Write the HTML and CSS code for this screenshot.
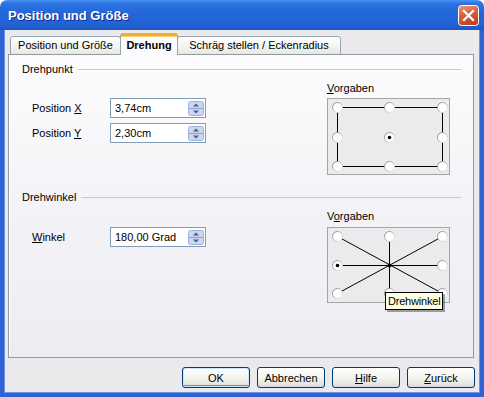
FILE: index.html
```html
<!DOCTYPE html>
<html lang="de">
  <head>
    <meta charset="UTF-8" />
    <meta name="viewport" content="width=device-width, initial-scale=1.0" />
    <title>Position und Größe</title>
    <link rel="stylesheet" href="styles.css">
  </head>
  <body>
    <div class="window">
      <div class="titlebar">
        <span class="title">Position und Größe</span>
        <span class="close">
          <svg width="21" height="21" viewBox="0 0 21 21">
            <defs>
              <linearGradient id="red" x1="0" y1="0" x2="0.3" y2="1">
                <stop offset="0" stop-color="#EE9A7A" />
                <stop offset="0.5" stop-color="#D9613C" />
                <stop offset="1" stop-color="#C24422" />
              </linearGradient>
            </defs>
            <rect x="0.5" y="0.5" width="20" height="20" rx="3" fill="url(#red)" stroke="#fff" />
            <path d="M6 6 L15 15 M15 6 L6 15" stroke="#fff" stroke-width="2.2" stroke-linecap="square" />
          </svg>
        </span>
      </div>

      <div class="client">
        <div class="tabs">
          <div class="tab tab-pos">Position und Größe</div>
          <div class="tab tab-rot active">Drehung</div>
          <div class="tab tab-slant">Schräg stellen / Eckenradius</div>
        </div>

        <div class="page">
          <section class="group">
            <div class="legend"><span>Drehpunkt</span></div>
            <div class="group-body">
              <div class="fields">
                <div class="field">
                  <label>Position <u>X</u></label>
                  <div class="spin">
                    <span>3,74cm</span>
                    <svg class="spin-btn" width="16" height="15" viewBox="0 0 16 15"><rect x="0.5" y="0.5" width="15" height="14" rx="2" fill="#CAD6F2" stroke="#9FB2DA" /><line x1="1" y1="7.5" x2="15" y2="7.5" stroke="#8CA2CF" /><path d="M8 2.5 L11 5.5 H5Z" fill="#4B5E86" /><path d="M8 12.5 L11 9.5 H5Z" fill="#4B5E86" /></svg>
                  </div>
                </div>
                <div class="field">
                  <label>Position <u>Y</u></label>
                  <div class="spin">
                    <span>2,30cm</span>
                    <svg class="spin-btn" width="16" height="15" viewBox="0 0 16 15"><rect x="0.5" y="0.5" width="15" height="14" rx="2" fill="#CAD6F2" stroke="#9FB2DA" /><line x1="1" y1="7.5" x2="15" y2="7.5" stroke="#8CA2CF" /><path d="M8 2.5 L11 5.5 H5Z" fill="#4B5E86" /><path d="M8 12.5 L11 9.5 H5Z" fill="#4B5E86" /></svg>
                  </div>
                </div>
              </div>
              <div class="presets">
                <div class="presets-label"><u>V</u>orgaben</div>
                <div class="preset-box">
                  <svg width="121" height="75" viewBox="0 0 121 75">
                    <defs>
                      <linearGradient id="ring" x1="0" y1="0" x2="1" y2="1">
                        <stop offset="0" stop-color="#7A7A7A" />
                        <stop offset="0.5" stop-color="#BDBDBD" />
                        <stop offset="1" stop-color="#F4F4F4" />
                      </linearGradient>
                    </defs>
                    <rect x="9.5" y="8.5" width="105" height="59" fill="none" stroke="#000" />
                    <g fill="#fff" stroke="url(#ring)">
                      <circle cx="9.5" cy="8.5" r="5" />
                      <circle cx="61.5" cy="8.5" r="5" />
                      <circle cx="114.5" cy="8.5" r="5" />
                      <circle cx="9.5" cy="38.5" r="5" />
                      <circle cx="61.5" cy="38.5" r="5" />
                      <circle cx="114.5" cy="38.5" r="5" />
                      <circle cx="9.5" cy="67.5" r="5" />
                      <circle cx="61.5" cy="67.5" r="5" />
                      <circle cx="114.5" cy="67.5" r="5" />
                    </g>
                    <circle cx="61.5" cy="38.5" r="1.8" fill="#000" />
                  </svg>
                </div>
              </div>
            </div>
          </section>

          <section class="group group-angle">
            <div class="legend"><span>Drehwinkel</span></div>
            <div class="group-body">
              <div class="fields fields-angle">
                <div class="field">
                  <label><u>W</u>inkel</label>
                  <div class="spin">
                    <span>180,00 Grad</span>
                    <svg class="spin-btn" width="16" height="15" viewBox="0 0 16 15"><rect x="0.5" y="0.5" width="15" height="14" rx="2" fill="#CAD6F2" stroke="#9FB2DA" /><line x1="1" y1="7.5" x2="15" y2="7.5" stroke="#8CA2CF" /><path d="M8 2.5 L11 5.5 H5Z" fill="#4B5E86" /><path d="M8 12.5 L11 9.5 H5Z" fill="#4B5E86" /></svg>
                  </div>
                </div>
              </div>
              <div class="presets">
                <div class="presets-label">V<u>o</u>rgaben</div>
                <div class="preset-box preset-angle">
                  <svg width="121" height="74" viewBox="0 0 121 74">
                    <g stroke="#000">
                      <line x1="9.5" y1="8.5" x2="114.5" y2="65.5" />
                      <line x1="114.5" y1="8.5" x2="9.5" y2="65.5" />
                      <line x1="9.5" y1="37.5" x2="114.5" y2="37.5" />
                      <line x1="61.5" y1="8.5" x2="61.5" y2="65.5" />
                    </g>
                    <g fill="#fff" stroke="url(#ring)">
                      <circle cx="9.5" cy="8.5" r="5" />
                      <circle cx="61.5" cy="8.5" r="5" />
                      <circle cx="114.5" cy="8.5" r="5" />
                      <circle cx="9.5" cy="37.5" r="5" />
                      <circle cx="114.5" cy="37.5" r="5" />
                      <circle cx="9.5" cy="65.5" r="5" />
                      <circle cx="61.5" cy="65.5" r="5" />
                      <circle cx="114.5" cy="65.5" r="5" />
                    </g>
                    <circle cx="61.5" cy="37.5" r="2" fill="#000" />
                    <circle cx="9.5" cy="37.5" r="1.8" fill="#000" />
                  </svg>
                  <div class="tooltip">Drehwinkel</div>
                </div>
              </div>
            </div>
          </section>
        </div>

        <div class="buttons">
          <button class="btn default">OK</button>
          <button class="btn">Abbrechen</button>
          <button class="btn"><u>H</u>ilfe</button>
          <button class="btn"><u>Z</u>urück</button>
        </div>
      </div>
    </div>
  </body>
</html>
```

FILE: styles.css
```css
html,
body {
  margin: 0;
  height: 100%;
}
body {
  background: #fff;
  font-family: "Liberation Sans", Arial, sans-serif;
  font-size: 11px;
  color: #000;
}
.window {
  width: 484px;
  height: 397px;
  display: flex;
  flex-direction: column;
  border-radius: 7px 7px 0 0;
  overflow: hidden;
}
.titlebar {
  height: 30px;
  flex: none;
  display: flex;
  align-items: center;
  justify-content: space-between;
  padding: 0 5px 0 8px;
  box-sizing: border-box;
  background: linear-gradient(#4A94F4 0, #2A72E2 12%, #2466D8 45%, #2262D4 80%, #1D56C4 100%);
}
.title {
  color: #fff;
  font-weight: 700;
  font-size: 13px;
  text-shadow: 1px 1px #0F2C8A;
}
.close {
  display: flex;
}
.client {
  flex: 1;
  display: flex;
  flex-direction: column;
  padding: 3px 4px 5px 4px;
  border: 4px solid #2E63D6;
  border-top: none;
  box-shadow: inset 1px 0 #6E94E6, inset -1px 0 #6E94E6, inset 0 -1px #6E94E6;
  background: #EBE9EC;
  box-sizing: border-box;
}
.tabs {
  height: 22px;
  margin: 0 0 -1px 2px;
  display: flex;
  align-items: flex-end;
}
.tab {
  height: 19px;
  box-sizing: border-box;
  display: flex;
  align-items: center;
  justify-content: center;
  padding-bottom: 1px;
  border: 1px solid #91A7B4;
  border-radius: 3px 3px 0 0;
  background: linear-gradient(#FFFFFF, #F3F3F0 60%, #E6E6E3);
}
.tab-pos {
  width: 111px;
}
.tab-rot {
  width: 58px;
}
.tab-slant {
  width: 164px;
  margin-left: -1px;
}
.tab.active {
  position: relative;
  z-index: 1;
  height: 22px;
  margin-left: -1px;
  border-top: 3px solid #F2AC2E;
  border-bottom: none;
  padding-bottom: 2px;
  font-weight: 700;
  background: #FCFCFE;
  box-shadow: inset 0 1px #FFD36A;
}
.page {
  width: 466px;
  height: 304px;
  box-sizing: border-box;
  border: 1px solid #919B9C;
  background: linear-gradient(#FCFCFE, #F2F2F6 60%, #ECECF3);
  padding: 7px 12px 0 13px;
  box-shadow: inset 1px 0 #fff;
}
.legend {
  display: flex;
  align-items: center;
  gap: 5px;
  height: 14px;
  line-height: 14px;
}
.legend::after {
  content: "";
  flex: 1;
  border-top: 1px solid #CBCBC3;
}
.group-angle {
  margin-top: 15px;
}
.group-body {
  display: flex;
  justify-content: space-between;
}
.fields {
  padding: 22px 0 0 10px;
  display: flex;
  flex-direction: column;
  gap: 5px;
}
.fields-angle {
  padding-top: 23px;
}
.field {
  display: flex;
  align-items: center;
}
.field label {
  width: 78px;
}
.spin {
  width: 96px;
  height: 20px;
  box-sizing: border-box;
  border: 1px solid #7F9DB9;
  background: #fff;
  display: flex;
  align-items: center;
  justify-content: space-between;
  padding: 0 1px 0 4px;
}
.spin-btn {
  display: block;
}
.presets {
  width: 123px;
  margin-right: 11px;
}
.presets-label {
  margin-top: 5px;
  height: 14px;
  line-height: 14px;
}
.preset-box {
  position: relative;
  margin-top: 3px;
  height: 77px;
  box-sizing: border-box;
  border: 1px solid #A5A5A5;
  background: #ECEAEC;
}
.preset-box svg {
  display: block;
}
.preset-angle {
  margin-top: 4px;
  height: 76px;
}
.tooltip {
  position: absolute;
  left: 57px;
  top: 64px;
  height: 18px;
  box-sizing: border-box;
  border: 1px solid #000;
  background: #FFFFE1;
  line-height: 16px;
  padding: 0 2px;
  letter-spacing: -0.2px;
  white-space: nowrap;
  box-shadow: 2px 2px 0 rgba(0, 0, 0, 0.35);
}
.buttons {
  margin-top: 9px;
  margin-right: 1px;
  display: flex;
  justify-content: flex-end;
  gap: 7px;
}
.btn {
  width: 68px;
  height: 21px;
  padding: 0;
  font-family: inherit;
  font-size: 11px;
  color: #000;
  border: 1px solid #003C74;
  border-radius: 3px;
  background: linear-gradient(#FFFFFF, #F4F4F0 50%, #E6E6E0 85%, #D6D0C5);
  box-shadow: inset 0 -2px #D2DDF0;
}
.btn.default {
  box-shadow: inset 0 0 0 1px #CEE7FF, inset 0 -2px #6982EE, inset -1px 0 #8CB4F2, inset 1px 0 #8CB4F2;
}
```
